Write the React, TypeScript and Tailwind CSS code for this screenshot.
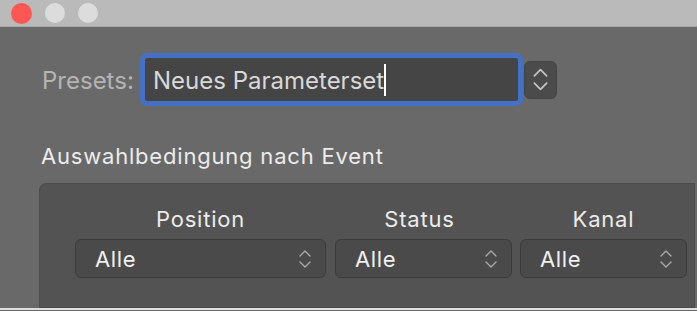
import React from "react";

const font = { fontFamily: "Inter, 'Noto Sans', sans-serif" };

function Chevrons({ w = 12, h = 22, color = "#a9a9a9" }: { w?: number; h?: number; color?: string }) {
  return (
    <svg width={w} height={h} viewBox="0 0 12 22" fill="none">
      <path d="M1 8 L6 3 L11 8" stroke={color} strokeWidth="1.4" strokeLinecap="round" strokeLinejoin="round" />
      <path d="M1 14 L6 19 L11 14" stroke={color} strokeWidth="1.4" strokeLinecap="round" strokeLinejoin="round" />
    </svg>
  );
}

function Dropdown({ width }: { width: string }) {
  return (
    <div className={`${width} h-[39px] rounded-[6px] border border-[#3b3b3b] bg-[#4a4a4a] flex items-center justify-between pl-[19px] pr-[14px]`}>
      <span className="text-[22px] leading-[26px] tracking-[0.6px] text-[#f0f0f0]">Alle</span>
      <Chevrons />
    </div>
  );
}

export default function App() {
  return (
    <div className="w-[697px] h-[311px] overflow-hidden bg-[#696969] flex flex-col" style={font}>
      <div className="h-[27px] shrink-0 bg-[#bababa] border-b border-[#a8a8a8] flex items-center pl-[11px] gap-[13px]">
        <div className="w-[21px] h-[21px] rounded-full bg-[#fd5754]" />
        <div className="w-[20px] h-[20px] rounded-full bg-[#dcdcdc]" />
        <div className="w-[20px] h-[20px] rounded-full bg-[#dcdcdc]" />
      </div>

      <div className="flex items-center mt-[26px] h-[53px] pl-[42px]">
        <span className="text-[24px] leading-[28px] text-[#b4b4b4] w-[98px] pt-[3px]">Presets:</span>
        <div className="w-[383px] h-[53px] rounded-[7px] border-[5px] border-[#4571c4] bg-[#454545] flex items-center pl-[8px]">
          <span className="text-[24px] leading-[28px] text-[#d8d8d8] pt-[3px]">Neues Parameterset</span>
          <span className="w-[2px] h-[32px] bg-white" />
        </div>
        <div className="ml-[1px] w-[33px] h-[38px] rounded-[6px] border border-[#444444] bg-[#4b4b4b] flex items-center justify-center">
          <Chevrons w={15} h={27} color="#c4c4c4" />
        </div>
      </div>

      <div className="mt-[38px] h-[24px] pl-[41px] text-[22px] leading-[24px] tracking-[0.8px] text-[#ececec]">
        Auswahlbedingung nach Event
      </div>

      <div className="mt-[15px] ml-[39px] w-[656px] h-[125px] shrink-0 rounded-tl-[7px] border border-[#4d4d4d] bg-[#535353] pt-[22px] pl-[35px] flex gap-[9px]">
        <div className="flex flex-col items-center gap-[7px]">
          <span className="h-[26px] text-[22px] leading-[26px] tracking-[0.8px] text-[#ececec]">Position</span>
          <Dropdown width="w-[251px]" />
        </div>
        <div className="flex flex-col items-center gap-[7px]">
          <span className="h-[26px] text-[22px] leading-[26px] tracking-[0.8px] text-[#ececec] pr-[8px]">Status</span>
          <Dropdown width="w-[177px]" />
        </div>
        <div className="flex flex-col items-center gap-[7px] -ml-[1px]">
          <span className="h-[26px] text-[22px] leading-[26px] tracking-[0.8px] text-[#ececec]">Kanal</span>
          <Dropdown width="w-[167px]" />
        </div>
      </div>
      <div className="h-[2px] shrink-0 bg-[#dedede]" />
    </div>
  );
}
